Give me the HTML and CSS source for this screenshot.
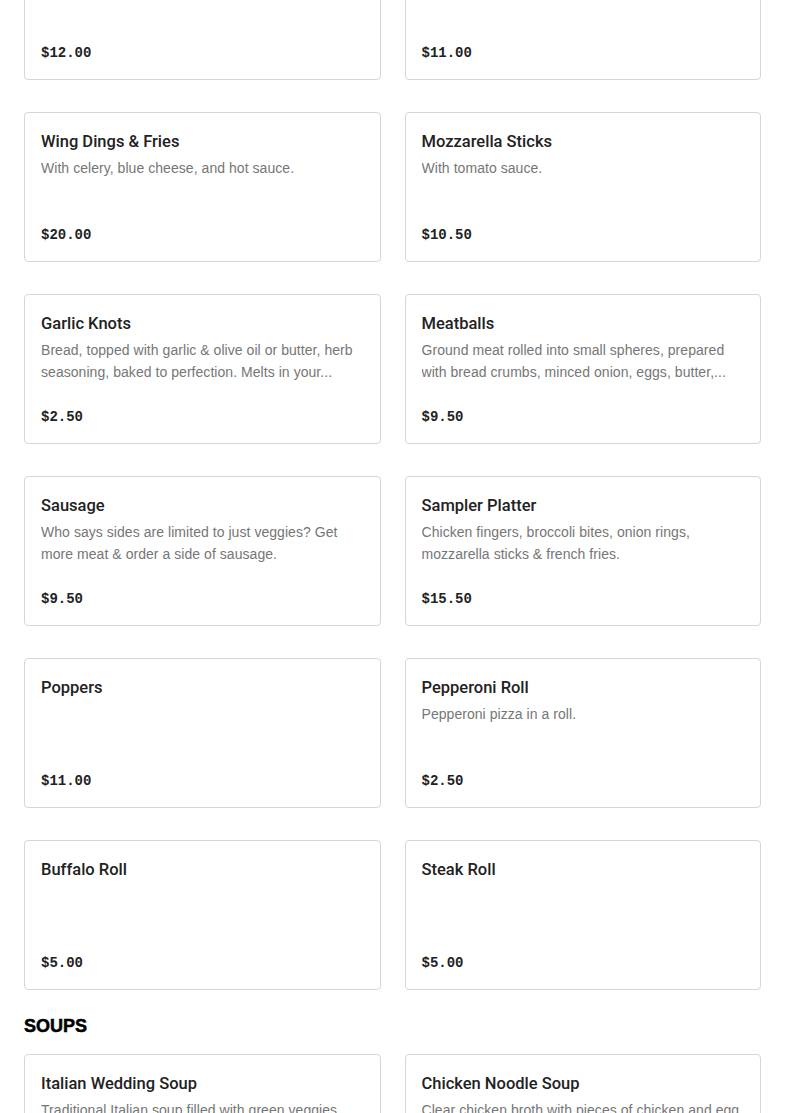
FILE: index.html
```html
<!DOCTYPE html>
<html lang="en">
<head>
<meta charset="utf-8">
<title>Menu</title>
<link rel="stylesheet" href="styles.css">
</head>
<body>
<main class="menu">
  <section class="section section-scrolled">
    <div class="grid">
      <article class="card"><h3 class="title">French Fries</h3><p class="desc"></p><div class="price">$12.00</div></article>
      <article class="card"><h3 class="title">Onion Rings</h3><p class="desc"></p><div class="price">$11.00</div></article>
      <article class="card"><h3 class="title">Wing Dings &amp; Fries</h3><p class="desc">With celery, blue cheese, and hot sauce.</p><div class="price">$20.00</div></article>
      <article class="card"><h3 class="title">Mozzarella Sticks</h3><p class="desc">With tomato sauce.</p><div class="price">$10.50</div></article>
      <article class="card"><h3 class="title">Garlic Knots</h3><p class="desc">Bread, topped with garlic &amp; olive oil or butter, herb seasoning, baked to perfection. Melts in your...</p><div class="price">$2.50</div></article>
      <article class="card"><h3 class="title">Meatballs</h3><p class="desc">Ground meat rolled into small spheres, prepared with bread crumbs, minced onion, eggs, butter,...</p><div class="price">$9.50</div></article>
      <article class="card"><h3 class="title">Sausage</h3><p class="desc">Who says sides are limited to just veggies? Get more meat &amp; order a side of sausage.</p><div class="price">$9.50</div></article>
      <article class="card"><h3 class="title">Sampler Platter</h3><p class="desc">Chicken fingers, broccoli bites, onion rings, mozzarella sticks &amp; french fries.</p><div class="price">$15.50</div></article>
      <article class="card"><h3 class="title">Poppers</h3><p class="desc"></p><div class="price">$11.00</div></article>
      <article class="card"><h3 class="title">Pepperoni Roll</h3><p class="desc">Pepperoni pizza in a roll.</p><div class="price">$2.50</div></article>
      <article class="card"><h3 class="title">Buffalo Roll</h3><p class="desc"></p><div class="price">$5.00</div></article>
      <article class="card"><h3 class="title">Steak Roll</h3><p class="desc"></p><div class="price">$5.00</div></article>
    </div>
  </section>
  <section class="section">
    <h2 class="section-title">SOUPS</h2>
    <div class="grid">
      <article class="card"><h3 class="title">Italian Wedding Soup</h3><p class="desc">Traditional Italian soup filled with green veggies and small meatballs.</p><div class="price">$6.00</div></article>
      <article class="card"><h3 class="title">Chicken Noodle Soup</h3><p class="desc">Clear chicken broth with pieces of chicken and egg noodles.</p><div class="price">$6.00</div></article>
    </div>
  </section>
</main>
</body>
</html>
```
FILE: styles.css
```css
html, body {
  margin: 0;
  padding: 0;
  background: #fff;
}
body {
  font-family: "Liberation Sans", Arial, sans-serif;
  color: #222;
}
.menu {
  padding: 0 24px;
}
.section-scrolled {
  margin-top: -70px;
}
.section-title {
  margin: 24px 0 16px;
  font-family: "Liberation Sans", Arial, sans-serif;
  font-weight: 900;
  font-size: 18px;
  line-height: 24px;
  color: #000;
  -webkit-text-stroke: 0.5px #000;
}
.grid {
  display: grid;
  grid-template-columns: 1fr 1fr;
  column-gap: 24px;
  row-gap: 32px;
}
.card {
  box-sizing: border-box;
  height: 150px;
  border: 1px solid #d6d6d6;
  border-radius: 4px;
  padding: 16px;
  display: flex;
  flex-direction: column;
  background: #fff;
}
.title {
  margin: 0;
  font-family: Roboto, "Liberation Sans", Arial, sans-serif;
  font-size: 16.5px;
  line-height: 25px;
  font-weight: 500;
  color: #222;
}
.desc {
  margin: 3px 0 0;
  font-size: 14px;
  line-height: 22px;
  color: #767676;
  letter-spacing: 0.05px;
  display: -webkit-box;
  -webkit-line-clamp: 2;
  -webkit-box-orient: vertical;
  overflow: hidden;
}
.price {
  margin-top: auto;
  font-family: "Liberation Mono", "Courier New", monospace;
  font-weight: 700;
  font-size: 14px;
  line-height: 20px;
  color: #222;
}
```
